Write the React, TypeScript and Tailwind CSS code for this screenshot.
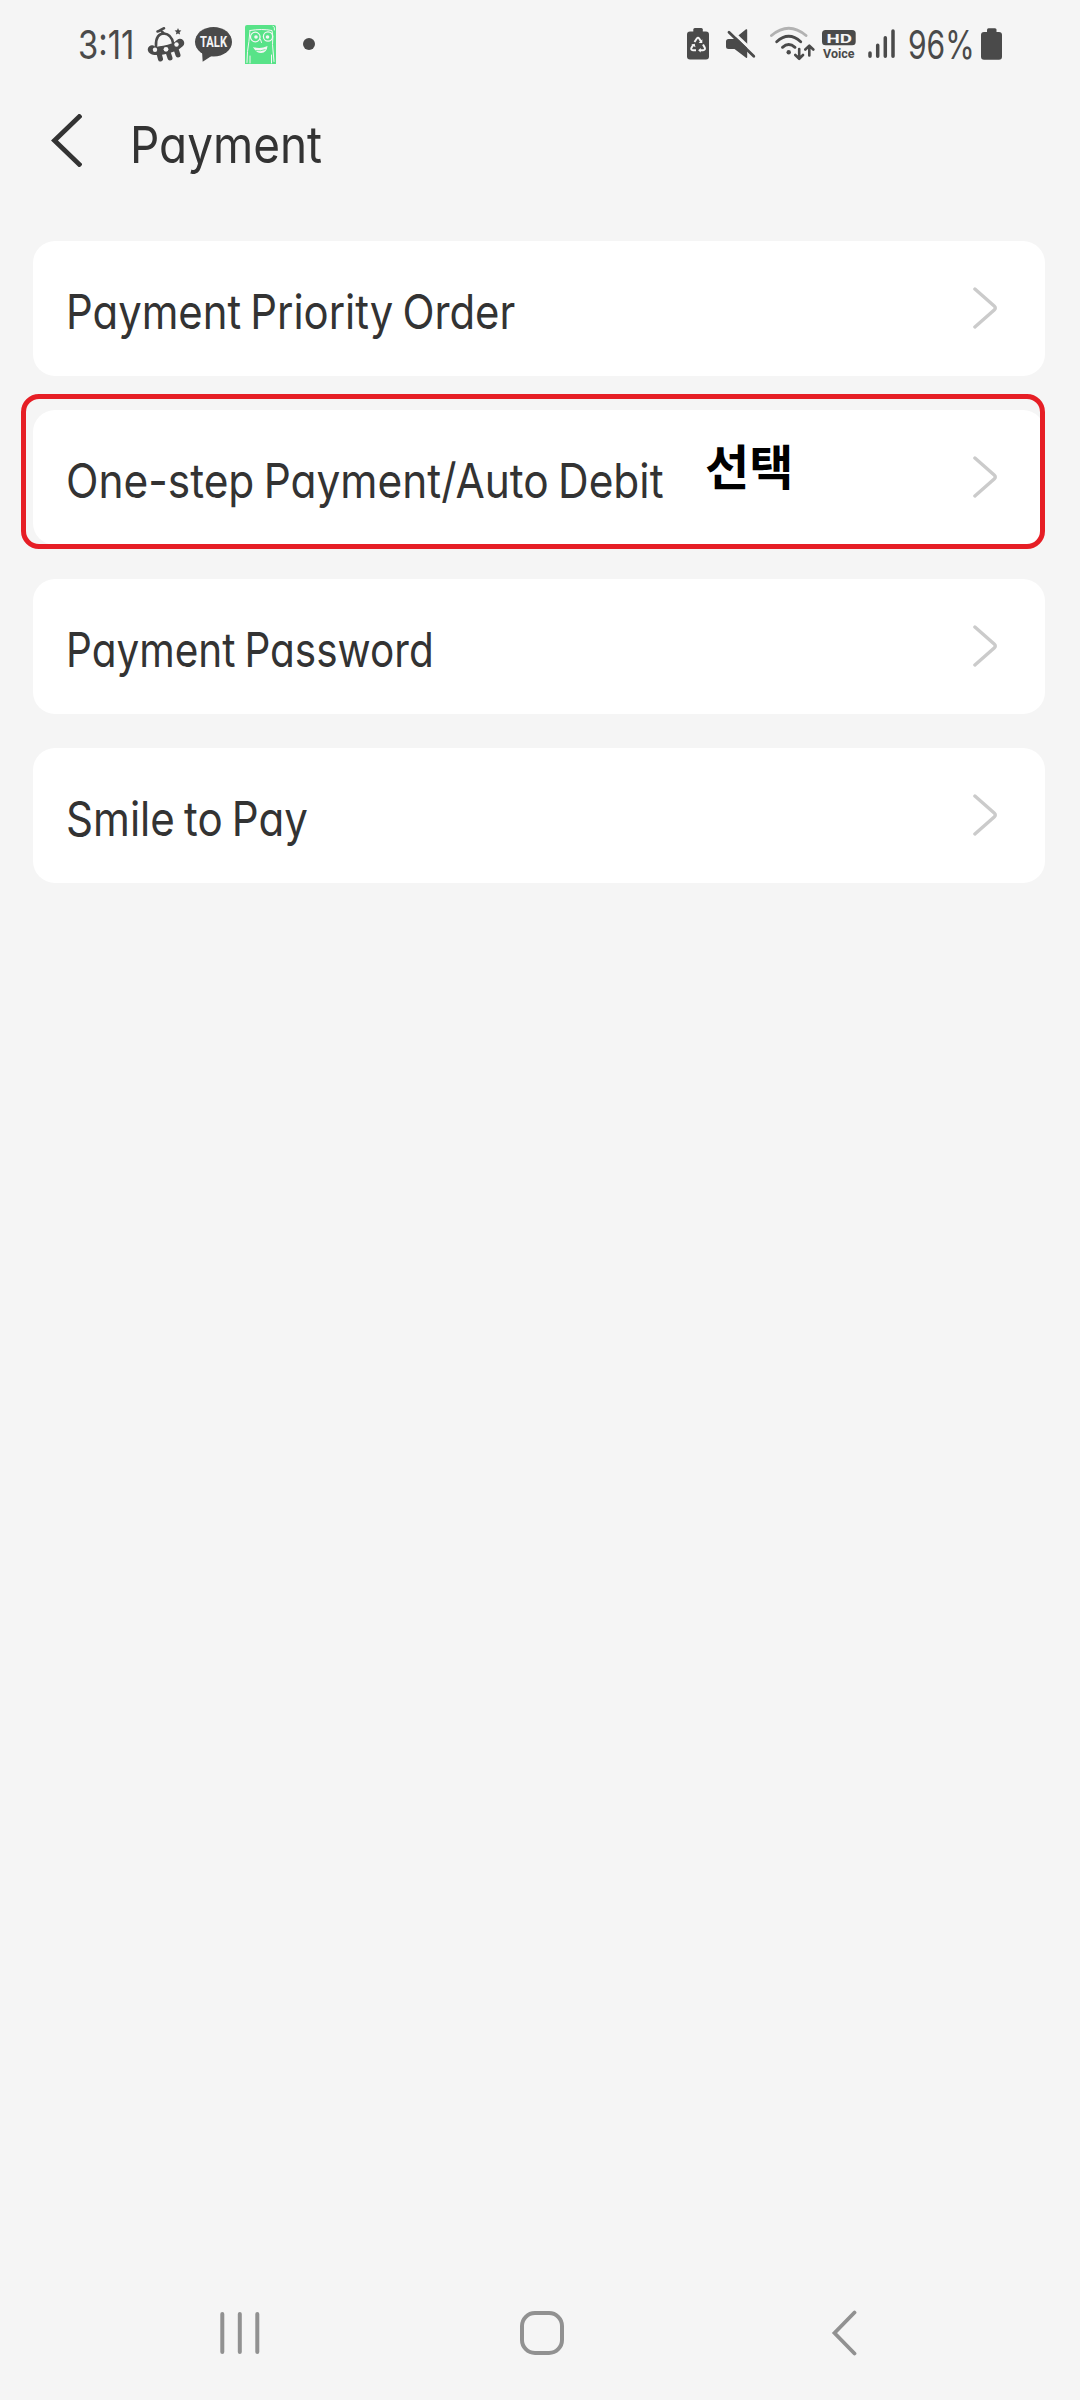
import React from 'react';

interface MenuItem {
  label: string;
  className: string;
  note?: string;
}

const items: MenuItem[] = [
  { label: 'Payment Priority Order', className: 'scale-x-[0.872]' },
  { label: 'One-step Payment/Auto Debit', className: 'scale-x-[0.884]', note: '선택' },
  { label: 'Payment Password', className: 'scale-x-[0.844]' },
  { label: 'Smile to Pay', className: 'scale-x-[0.877]' },
];

const UfoIcon = () => (
  <svg className="w-10 h-10 ml-[7px]" viewBox="0 0 40 40" fill="none" stroke="#4a4a4a" strokeLinecap="round" strokeLinejoin="round">
    <path d="M10 22C9.500 14 13 9 18 9.500s8 4 9 9.500" strokeWidth="2.600" />
    <path d="M11.500 7.500c2.500-.500 4-2.500 6.500-3.200M15 6l2.500 3.500" strokeWidth="2.600" />
    <path d="M6 25.500q2 2.500 12 .500 11-2 16-7" strokeWidth="8.500" />
    <path d="M12.800 28.500l1.700 6.500M22 28l2 6M30 25l2 6" strokeWidth="5" />
    <path d="M32 4l1 2.200 2.400.300-1.800 1.700.500 2.400-2.100-1.200-2.100 1.200.500-2.400-1.800-1.700 2.400-.300Z" fill="#4a4a4a" stroke="none" />
    <circle cx="9" cy="25.700" r="2.200" fill="#f5f5f5" stroke="none" />
    <circle cx="20" cy="25.300" r="2.400" fill="#f5f5f5" stroke="none" />
    <circle cx="30.500" cy="20.500" r="2.200" fill="#f5f5f5" stroke="none" />
  </svg>
);

const TalkIcon = () => (
  <svg className="w-[41px] h-10 ml-[7px]" viewBox="0 0 41 40">
    <ellipse cx="20.500" cy="17.800" rx="18.500" ry="14.800" fill="#4a4a4a" />
    <path d="M9 27l.700 10.700L20 31Z" fill="#4a4a4a" />
    <text x="7" y="22.800" textLength="27" lengthAdjust="spacingAndGlyphs" className="font-['Roboto'] font-bold" fontSize="14" fill="#f5f5f5">TALK</text>
  </svg>
);

const GreenIcon = () => (
  <svg className="w-[35px] h-10 ml-[9px]" viewBox="0 0 35 40">
    <path d="M4 1h27q2 0 2 2v37H2V3q0-2 2-2Z" fill="#58e388" />
    <g fill="none" stroke="#f5f5f5" strokeLinecap="round">
      <circle cx="12.300" cy="13" r="4.800" strokeWidth="1.200" />
      <circle cx="25" cy="12.500" r="4.600" strokeWidth="1.200" />
      <path d="M7 6.500q12-2 22 0 1.500 5 .500 14l1.500 17M7 6.500q-1 12-2.500 21l-.500 11M7 32v7M28.500 31v8M30 2q2 1 1.500 4M17.500 15.500l1 3" strokeWidth="1" />
    </g>
    <circle cx="13" cy="13" r="1.800" fill="#f5f5f5" />
    <circle cx="24.500" cy="13" r="1.800" fill="#f5f5f5" />
    <path d="M10 23q7.500 2.500 14.500-1-.500 6.500-6.500 7-5 0-8-6Z" fill="#f5f5f5" />
    <path d="M12.500 26.500q5 1 10-1" stroke="#58e388" strokeWidth=".8" fill="none" />
  </svg>
);

const RecycleBatteryIcon = () => (
  <svg className="w-6 h-10" viewBox="0 0 24 40">
    <rect x="7.300" y="4" width="9.500" height="6" rx="1.500" fill="#4a4a4a" />
    <rect x="1" y="7.500" width="22" height="28" rx="3" fill="#4a4a4a" />
    <g fill="none" stroke="#f5f5f5" strokeWidth="2">
      <path d="M8.500 18l2.300-3.500q1.200-1.500 2.400 0L15 17.500" />
      <path d="M17 20.500l1.800 3.200q.700 2.300-1.800 2.600H14" />
      <path d="M10 26.300H7q-2.500-.300-1.500-2.600L7.500 20.500" />
    </g>
    <path d="M16.300 15.300v3.700h-3.700ZM14.700 24v4.600l-2.600-2.300ZM5.200 20.700l3.500-1 .800 3.500Z" fill="#f5f5f5" />
  </svg>
);

const MuteIcon = () => (
  <svg className="w-8 h-10 ml-[15px]" viewBox="0 0 32 40">
    <path d="M3.500 15H9L21 5.300q1.200-.500 1.200.800V33q0 1.300-1.200.700L9.500 25H3.500Q1 25 1 22.500V17.500Q1 15 3.500 15Z" fill="#4a4a4a" />
    <path d="M5 5.300L32 31.200" stroke="#f5f5f5" strokeWidth="3" />
    <path d="M4 8.300L28.800 32.300" stroke="#4a4a4a" strokeWidth="2.800" strokeLinecap="round" />
  </svg>
);

const WifiIcon = () => (
  <svg className="w-[46px] h-10 ml-3" viewBox="0 0 46 40" fill="none" stroke="#4a4a4a" strokeWidth="2.900" strokeLinecap="round" strokeLinejoin="round">
    <path d="M2.500 11.500Q19.700-3 37 11.500" stroke="#b2b2b2" />
    <path d="M7.700 17.700q12-11 24 0" />
    <path d="M13.500 23.300q6.200-5.500 12.500 0" />
    <circle cx="19.700" cy="28.300" r="2.200" fill="#4a4a4a" stroke="none" />
    <path d="M30.200 25v9M26.300 31l3.900 3.800L34 31M40.300 31.500v-9M36.300 25.500l4-3.800 4 3.800" strokeWidth="2.600" />
  </svg>
);

const HdVoiceIcon = () => (
  <svg className="w-9 h-10 ml-[6px]" viewBox="0 0 36 40" fontFamily="Roboto, sans-serif">
    <rect x="1" y="6" width="33.700" height="15.300" rx="3.500" fill="#4a4a4a" />
    <text x="5.500" y="18.600" textLength="25.500" lengthAdjust="spacingAndGlyphs" fontSize="13.500" fontWeight="700" fill="#f5f5f5">HD</text>
    <text x="2" y="33.800" textLength="31.500" lengthAdjust="spacingAndGlyphs" fontSize="13" fontWeight="700" fill="#4a4a4a">Voice</text>
  </svg>
);

const SignalIcon = () => (
  <svg className="w-[30px] h-10 ml-[9px]" viewBox="0 0 30 40" stroke="#4a4a4a" strokeWidth="3.500" strokeLinecap="round">
    <path d="M4 29v3.300M11.700 21.300v11M19.300 13.700v18.600M27 7v25.300" />
  </svg>
);

const BatteryIcon = () => (
  <svg className="w-[23px] h-10" viewBox="0 0 23 40" fill="#4a4a4a">
    <rect x="7" y="4.300" width="9.500" height="6" rx="1.500" />
    <rect x="1" y="8" width="21" height="27.700" rx="3" />
  </svg>
);

const StatusBar = () => (
  <div className="flex items-center h-[88px] pl-[78px] pr-[77px] text-[#4a4a4a]">
    <div className="w-[61px] pt-px">
      <span className="inline-block origin-left scale-x-[0.84] text-[39px] leading-none whitespace-nowrap">3:11</span>
    </div>
    <UfoIcon />
    <TalkIcon />
    <GreenIcon />
    <div className="w-3 h-3 ml-[25px] rounded-full bg-[#4a4a4a]"></div>
    <div className="flex items-center ml-auto">
      <RecycleBatteryIcon />
      <MuteIcon />
      <WifiIcon />
      <HdVoiceIcon />
      <SignalIcon />
      <div className="w-[72px] ml-3 pt-px">
        <span className="inline-block origin-left scale-x-[0.77] text-[39px] leading-none whitespace-nowrap">96%</span>
      </div>
      <BatteryIcon />
    </div>
  </div>
);

const MenuRow = ({ label, className, note }: MenuItem) => (
  <li className="relative flex items-center justify-between h-[135px] pl-[33px] pr-12 bg-white rounded-[22px]">
    <span className={`pt-[7px] origin-left text-[48px] leading-none whitespace-nowrap [word-spacing:-3px] ${className}`}>{label}</span>
    <svg className="w-6 h-[42px] -mt-[1px]" viewBox="0 0 24 42" fill="none" stroke="#cbcbcb" strokeWidth="3.400" strokeLinecap="round">
      <path d="M1.900 2L21.200 19q2.200 2 0 4L1.900 40" />
    </svg>
    {note && (
      <>
        <span className="absolute left-[672px] top-[30px] font-['Noto_Sans_CJK_KR',sans-serif] font-bold text-[48px] leading-none text-black">{note}</span>
        <div className="absolute -left-3 -top-4 w-[1024px] h-[155px] border-[5px] border-[#e61e25] rounded-[18px]"></div>
      </>
    )}
  </li>
);

const NavBar = () => (
  <nav className="flex items-center justify-between h-[134px] mt-auto pl-[220px] pr-[221px]">
    <svg className="w-10 h-11" viewBox="0 0 40 44" stroke="#919191" strokeWidth="4" strokeLinecap="round">
      <path d="M2.300 3v38M19.800 3v38M37.300 3v38" />
    </svg>
    <svg className="w-11 h-11 -ml-[7px]" viewBox="0 0 44 44" fill="none" stroke="#919191" strokeWidth="4">
      <rect x="2" y="2" width="40" height="40" rx="13" />
    </svg>
    <svg className="w-7 h-[46px]" viewBox="0 0 28 46" fill="none" stroke="#919191" strokeWidth="3.800" strokeLinecap="round">
      <path d="M23.500 2.500L3.500 23l20 20.500" />
    </svg>
  </nav>
);

const App: React.FC = () => {
  return (
    <div className="flex flex-col w-[1080px] h-[2400px] overflow-hidden bg-[#f5f5f5] font-['Inter',sans-serif] [font-feature-settings:'cv11']">
      <StatusBar />
      <header className="flex items-center h-[110px] pl-[50px] text-[#333]">
        <svg className="w-8 h-[53px] -mt-[5px]" viewBox="0 0 32 53" fill="none" stroke="#333" strokeWidth="4.800">
          <path d="M31 1L4.500 26.500 31 52" />
        </svg>
        <h1 className="ml-[48px] mt-0.5 origin-left scale-x-[0.9] text-[51px] leading-none">Payment</h1>
      </header>
      <main className="px-[33px] pt-[43px] text-[#333]">
        <ul className="flex flex-col gap-[34px] w-[1012px]">
          {items.map(item => <MenuRow key={item.label} {...item} />)}
        </ul>
      </main>
      <NavBar />
    </div>
  );
};

export default App;
